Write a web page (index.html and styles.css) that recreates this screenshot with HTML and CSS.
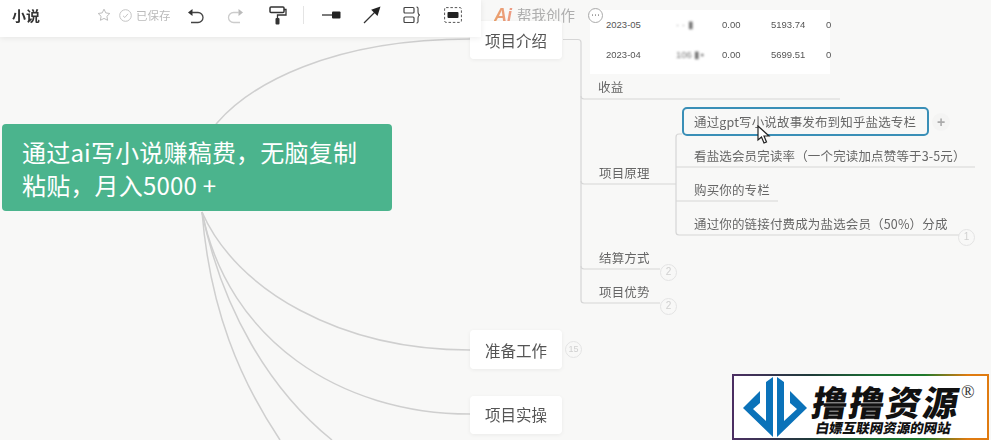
FILE: index.html
```html
<!DOCTYPE html>
<html lang="zh-CN">
<head>
<meta charset="utf-8">
<title>小说</title>
<link rel="stylesheet" href="styles.css">
</head>
<body>
<div class="app">
  <header class="toolbar">
    <span class="doc-title">小说</span>
    <svg class="ic ic-star" width="14" height="14" viewBox="0 0 14 14"><path d="M7 1.2l1.8 3.7 4 .6-2.9 2.8.7 4L7 10.4l-3.600 1.900.7-4L1.200 5.500l4-.6z" fill="none" stroke="#bdbdbd"/></svg>
    <svg class="ic ic-check" width="13" height="13" viewBox="0 0 13 13"><circle cx="6.500" cy="6.500" r="5.800" fill="none" stroke="#c4c4c4"/><path d="M4 6.800l1.800 1.700L9 4.800" fill="none" stroke="#c4c4c4"/></svg>
    <span class="saved">已保存</span>
    <svg class="ic ic-undo" width="17" height="17" viewBox="0 0 17 17"><path d="M1 5.500L5.500 2v7z" fill="#333"/><path d="M5 5.500h6a4.500 4.500 0 0 1 0 10H4" fill="none" stroke="#444" stroke-width="1.300"/></svg>
    <svg class="ic ic-redo" width="17" height="17" viewBox="0 0 17 17"><path d="M16 5.500L11.500 2v7z" fill="#bbb"/><path d="M12 5.500H6.500a4.500 4.500 0 0 0 0 10H13" fill="none" stroke="#ccc" stroke-width="1.300"/></svg>
    <svg class="ic ic-roller" width="18" height="19" viewBox="0 0 18 19"><rect x="1" y="1" width="14" height="5.500" rx="1" fill="none" stroke="#333" stroke-width="1.500"/><path d="M15 3.500h2v5.500H8.500v3" fill="none" stroke="#333" stroke-width="1.300"/><rect x="6.500" y="12" width="4" height="6.500" rx="1" fill="#333"/></svg>
    <span class="divider"></span>
    <svg class="ic ic-sub" width="19" height="10" viewBox="0 0 19 10"><path d="M0 5h11" stroke="#333" stroke-width="1.300"/><rect x="10" y="1.500" width="8.500" height="7" rx="1" fill="#222"/></svg>
    <svg class="ic ic-arrow" width="18" height="18" viewBox="0 0 18 18"><path d="M1 17L12 6" stroke="#333" stroke-width="1.300"/><path d="M17.500.5L14.500 10 8.200 3.700z" fill="#222"/></svg>
    <svg class="ic ic-brace" width="18" height="18" viewBox="0 0 18 18"><rect x="1" y="1.500" width="10" height="5.500" rx="1" fill="none" stroke="#444" stroke-width="1.200"/><rect x="1" y="11" width="10" height="5.500" rx="1" fill="none" stroke="#444" stroke-width="1.200"/><path d="M13.500 1c2 0 1.500 2 1.500 4 0 2 .5 4 2 4-1.500 0-2 2-2 4 0 2 .5 4-1.500 4" fill="none" stroke="#444" stroke-width="1.100"/></svg>
    <svg class="ic ic-box" width="18" height="16" viewBox="0 0 18 16"><rect x=".6" y=".6" width="16.800" height="14.800" rx="1.500" fill="none" stroke="#555" stroke-dasharray="2.500 1.800"/><rect x="3.500" y="5" width="11" height="6" rx="1" fill="#222"/></svg>
  </header>

  <main class="canvas">
    <svg class="links" width="991" height="440" viewBox="0 0 991 440">
      <g class="curve">
        <path d="M214 127L217 123C250 85 330 39 470 39"/>
        <path d="M202 212C236 290 340 350 470 350"/>
        <path d="M202 212C228 340 340 414 470 414"/>
        <path d="M202 212C222 310 270 390 332 440"/>
        <path d="M202 212C210 310 240 380 280 440"/>
      </g>
      <g class="branch">
        <path d="M563 39.500h15a3 3 0 0 1 3 3V300a3 3 0 0 0 3 3h76"/>
        <path d="M581 96a3 3 0 0 0 3 3H840"/>
        <path d="M581 181a3 3 0 0 0 3 3H676"/>
        <path d="M581 266a3 3 0 0 0 3 3H660"/>
        <path d="M682 134h-3a3 3 0 0 0-3 3V232a3 3 0 0 0 3 3H960"/>
        <path d="M676 167H975"/>
        <path d="M676 201H778"/>
      </g>
    </svg>

    <section class="income-table">
      <div class="income-row">
        <span class="col-date">2023-05</span><span class="col-blur">· · ▮</span><span class="col-a">0.00</span><span class="col-b">5193.74</span><span class="col-c">0</span>
      </div>
      <div class="income-row">
        <span class="col-date">2023-04</span><span class="col-blur">106 ▮▪</span><span class="col-a">0.00</span><span class="col-b">5699.51</span><span class="col-c">0</span>
      </div>
    </section>

    <div class="ai-entry">
      <span class="ai-mark">Ai</span><span class="ai-text">帮我创作</span>
      <span class="ai-more"><i></i><i></i><i></i></span>
    </div>

    <div class="node root">通过ai写小说赚稿费，无脑复制<br>粘贴，月入5000 +</div>

    <div class="node main n-intro">项目介绍</div>
    <div class="node main n-prep">准备工作</div>
    <div class="node main n-real">项目实操</div>
    <span class="count c-prep">15</span>

    <div class="node sub n-income">收益</div>
    <div class="node sub n-principle">项目原理</div>
    <div class="node sub n-settle">结算方式</div>
    <div class="node sub n-adv">项目优势</div>

    <div class="node sub selected n-gpt">通过gpt写小说故事发布到知乎盐选专栏</div>
    <span class="add">+</span>
    <div class="node sub n-rate">看盐选会员完读率（一个完读加点赞等于3-5元）</div>
    <div class="node sub n-buy">购买你的专栏</div>
    <div class="node sub n-link">通过你的链接付费成为盐选会员（50%）分成</div>

    <span class="count c-link">1</span>
    <span class="count c-settle">2</span>
    <span class="count c-adv">2</span>

    <svg class="cursor" width="14" height="20" viewBox="0 0 14 20"><path d="M1 1v14l3.500-3 2.500 6 2.500-1-2.500-6h5z" fill="#fff" stroke="#222" stroke-width="1.200"/></svg>
  </main>

  <aside class="brand">
    <svg class="brand-icon" width="68" height="62" viewBox="0 0 68 62">
      <g fill="#0b72b9">
        <path d="M2 32L19 15V27L12 33L25 45V6L32 1V61z"/>
        <path d="M66 32L49 15V27L56 33L43 45V6L36 1V61z"/>
      </g>
    </svg>
    <div class="brand-text">
      <div class="brand-name">撸撸资源</div>
      <div class="brand-slogan">白嫖互联网资源的网站</div>
    </div>
    <span class="brand-reg">®</span>
  </aside>
</div>
</body>
</html>
```
FILE: styles.css
```css
*, *::before, *::after { box-sizing: border-box; }
html, body { margin: 0; padding: 0; }
body {
  width: 991px;
  height: 440px;
  overflow: hidden;
  background: #f8f8f7;
  font-family: "Noto Sans CJK SC", "Noto Sans", sans-serif;
}
.app { position: relative; width: 991px; height: 440px; overflow: hidden; }

.toolbar {
  position: relative;
  z-index: 3;
  display: flex;
  align-items: center;
  width: 481px;
  height: 37px;
  padding-left: 12px;
  padding-bottom: 7px;
  background: #fff;
  box-shadow: 0 1px 6px rgba(0, 0, 0, .08);
}
.doc-title { font-size: 14px; font-weight: 700; color: #333; width: 85px; }
.ic { flex: none; display: block; }
.ic-check { margin-left: 8px; }
.saved { margin-left: 4px; font-size: 11.500px; color: #bbb; width: 35px; white-space: nowrap; }
.ic-undo { margin-left: 16px; }
.ic-redo { margin-left: 23px; }
.ic-roller { margin-left: 25px; }
.divider { width: 1px; height: 18px; margin-left: 16px; background: #e4e4e4; }
.ic-sub { margin-left: 18px; }
.ic-arrow { margin-left: 22px; }
.ic-brace { margin-left: 22px; }
.ic-box { margin-left: 23px; }

.canvas { position: absolute; inset: 0; filter: blur(.35px); }
.links { position: absolute; left: 0; top: 0; fill: none; }
.curve path { stroke: #cfcfcf; stroke-width: 1.500; }
.branch path { stroke: #d6d6d6; stroke-width: 1.200; }

.income-table {
  position: absolute;
  left: 590px;
  top: 10px;
  width: 240px;
  height: 64px;
  background: #fff;
}
.income-row {
  position: relative;
  height: 30px;
  font: 9.500px/30px "Liberation Sans", sans-serif;
  color: #555;
}
.income-row span { position: absolute; top: 0; white-space: nowrap; }
.col-date { left: 16px; }
.col-blur { left: 86px; color: #777; filter: blur(1px); }
.col-a { left: 132px; }
.col-b { left: 181px; }
.col-c { left: 236px; }

.ai-entry {
  position: absolute;
  left: 494px;
  top: 4px;
  display: flex;
  align-items: center;
  height: 22px;
}
.ai-mark {
  width: 23px;
  font: italic 700 18px/22px "Liberation Sans", sans-serif;
  background: linear-gradient(90deg, #e9a06a, #ee9a8c);
  -webkit-background-clip: text;
  background-clip: text;
  color: transparent;
}
.ai-text { font-size: 14.500px; line-height: 22px; color: #aeaeae; width: 60px; white-space: nowrap; }
.ai-more {
  display: flex;
  align-items: center;
  justify-content: center;
  gap: 1.500px;
  width: 15px;
  height: 15px;
  margin-left: 11px;
  border: 1px solid #aaa;
  border-radius: 50%;
}
.ai-more i { width: 1.500px; height: 1.500px; background: #999; border-radius: 50%; }

.node { position: absolute; white-space: nowrap; }
.root {
  left: 2px;
  top: 124px;
  width: 390px;
  height: 87px;
  padding: 11px 20px;
  background: #4bb48d;
  border-radius: 4px;
  color: #fff;
  font-size: 24px;
  line-height: 33px;
  letter-spacing: .2px;
}
.main {
  left: 470px;
  width: 92px;
  height: 38px;
  background: #fff;
  border-radius: 4px;
  box-shadow: 0 1px 4px rgba(0, 0, 0, .06);
  color: #555;
  font-size: 15.500px;
  line-height: 38px;
  text-align: center;
}
.n-intro { top: 21px; }
.n-prep { top: 330px; height: 39px; line-height: 41px; }
.n-real { top: 396px; line-height: 37px; }

.sub { font-size: 12.500px; line-height: 18px; color: #666; letter-spacing: .15px; }
.n-income { left: 598px; top: 78px; }
.n-principle { left: 599px; top: 164px; }
.n-settle { left: 599px; top: 249px; }
.n-adv { left: 599px; top: 283px; }
.n-gpt { left: 694px; top: 113px; }
.n-rate { left: 694px; top: 147px; }
.n-buy { left: 694px; top: 181px; }
.n-link { left: 694px; top: 215px; }

.selected::before {
  content: "";
  position: absolute;
  left: -12px;
  top: -6px;
  width: 247px;
  height: 29px;
  border: 2px solid #3a8fb7;
  border-radius: 5px;
}

.add {
  position: absolute;
  left: 932px;
  top: 113px;
  width: 18px;
  height: 18px;
  border-radius: 50%;
  background: #f4f4f3;
  color: #aaa;
  font: 700 14px/18px "Liberation Sans", sans-serif;
  text-align: center;
}

.count {
  position: absolute;
  width: 17px;
  height: 17px;
  border: 1.500px solid #e3e3e3;
  border-radius: 50%;
  background: #f8f8f7;
  color: #d0d0d0;
  font: 10px/14px "Liberation Sans", sans-serif;
  text-align: center;
}
.c-prep { left: 565px; top: 341px; font-size: 9px; }
.c-link { left: 958px; top: 229px; }
.c-settle { left: 660px; top: 264px; }
.c-adv { left: 660px; top: 298px; }

.cursor { position: absolute; left: 757px; top: 125px; }

.brand {
  position: absolute;
  z-index: 4;
  left: 732px;
  top: 374px;
  width: 257px;
  height: 66px;
  display: flex;
  align-items: center;
  padding-left: 7px;
  background: #fff;
  border: 2px solid;
  border-image: linear-gradient(90deg, #4c2f63 0%, #1f3a3a 30%, #1c6e34 55%, #1f7a2c 75%, #e07b10 92%, #e07b10 100%) 1;
}
.brand-icon { flex: none; }
.brand-text { margin-left: 4px; }
.brand-name {
  font-size: 35px;
  font-weight: 900;
  line-height: 38px;
  margin-top: 3px;
  color: #111;
  letter-spacing: 2px;
  transform: skewX(-10deg);
  white-space: nowrap;
}
.brand-slogan {
  margin-left: 3px;
  font-size: 13.500px;
  font-weight: 900;
  line-height: 15px;
  color: #111;
  transform: skewX(-10deg);
  white-space: nowrap;
}
.brand-reg {
  position: absolute;
  left: 227px;
  top: 6px;
  font: 400 18px/20px "Liberation Serif", serif;
  color: #333;
}
```
